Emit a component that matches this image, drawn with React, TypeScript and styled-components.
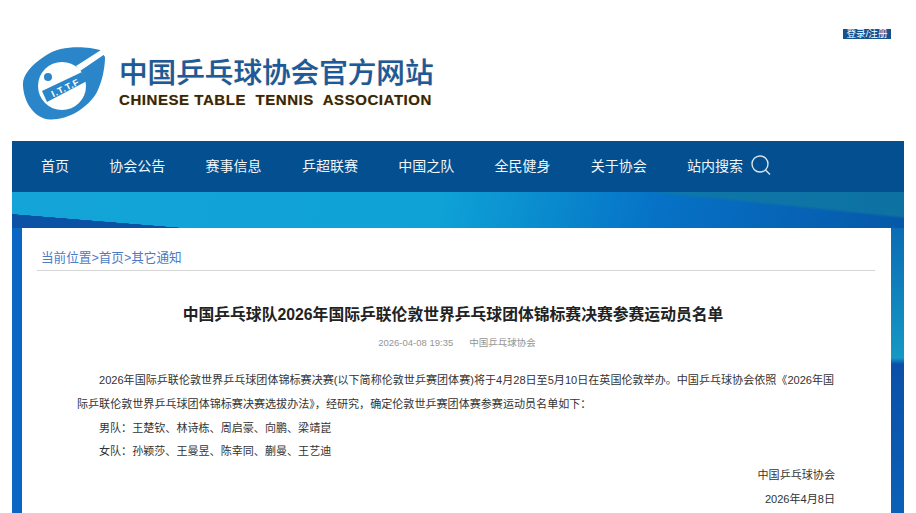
import styled, { createGlobalStyle } from "styled-components";

const CJK = `"Liberation Sans", "Noto Sans CJK SC", sans-serif`;

const GlobalStyle = createGlobalStyle`
  html, body {
    margin: 0;
    padding: 0;
    background: #fff;
    overflow: hidden;
    font-family: ${CJK};
  }
`;

const Page = styled.div`
  width: 892px;
  height: 513px;
  margin-left: 12px;
  overflow: hidden;
`;

const Header = styled.header`
  height: 141px;
  position: relative;
  display: flex;
  align-items: flex-end;
`;

const Logo = styled.a`
  display: flex;
  align-items: center;
  gap: 13px;
  margin: 0 0 20px 10px;
  text-decoration: none;
`;

const LogoText = styled.div`
  display: flex;
  flex-direction: column;
  margin-bottom: 4px;
`;

const LogoCn = styled.div`
  font-size: 28.6px;
  line-height: 36px;
  font-weight: 500;
  color: #1a5a9e;
  white-space: nowrap;
  text-shadow: 0 0 1px #c9a878;
`;

const LogoEn = styled.div`
  font-size: 15px;
  line-height: 17px;
  font-weight: 700;
  letter-spacing: 0.56px;
  color: #33280f;
  white-space: pre;
  text-shadow: 0 0 1px #d8a868;
`;

const LoginLink = styled.a`
  position: absolute;
  top: 29px;
  right: 13px;
  height: 10px;
  padding: 0 3.5px;
  background: #14528f;
  color: #fff;
  font-size: 9.6px;
  line-height: 10px;
`;

const Nav = styled.nav`
  height: 51px;
  box-sizing: border-box;
  padding: 0 0 3px 29px;
  background: #034f8f;
  display: flex;
  align-items: center;
  gap: 40.3px;
`;

const NavItem = styled.a`
  color: #f2f6fa;
  font-size: 14px;
  white-space: nowrap;
`;

const SearchItem = styled(NavItem)`
  display: flex;
  align-items: center;
  gap: 7px;
`;

const Stage = styled.main`
  position: relative;
  height: 321px;
  padding: 36px 13px 0 10px;
  box-sizing: border-box;
  background:
    linear-gradient(180deg, #0a6cb4 36px, #1598c4 166px, #0b50a8 172px, #0a60b8 100%) right top / 13px 100% no-repeat,
    #0a66c2;
`;

const Sky = styled.div`
  position: absolute;
  inset: 0 0 auto 0;
  height: 36px;
  background:
    linear-gradient(to top right, #0b52a6 49.5%, transparent 50.5%) left bottom / 172px 14px no-repeat,
    linear-gradient(to top right, transparent 48%, rgba(16, 122, 160, 0.75) 54%) right top / 255px 26px no-repeat,
    linear-gradient(104deg, #14a4d8 0%, #0ea2d6 48%, #0672c6 72%, #0658a8 100%);
`;

const Card = styled.article`
  position: relative;
  height: 100%;
  box-sizing: border-box;
  background: #fff;
  padding: 0 16px 0 15px;
`;

const Crumb = styled.div`
  height: 43px;
  box-sizing: border-box;
  padding: 22px 0 0 4px;
  font-size: 12.6px;
  line-height: 16px;
  color: #4a7cc4;
  border-bottom: 1px solid #d6d6d6;
`;

const Title = styled.h1`
  margin: 33px 6px 0 0;
  font-size: 15.8px;
  line-height: 22px;
  font-weight: 700;
  text-align: center;
  color: #222;
`;

const Meta = styled.div`
  margin: 10px 0 0 2px;
  display: flex;
  justify-content: center;
  gap: 16px;
  font-size: 9.5px;
  line-height: 14px;
  color: #959595;
`;

const Body = styled.div`
  margin: 19px 40px 0 40px;
  font-size: 11.07px;
  line-height: 23.8px;
  color: #333;
`;

const Para = styled.p<{ $right?: boolean }>`
  margin: 0;
  text-indent: ${(p) => (p.$right ? 0 : "22px")};
  text-align: ${(p) => (p.$right ? "right" : "left")};
`;

const MarkLetters = styled.text`
  font-family: "Liberation Sans", sans-serif;
  font-size: 9px;
  font-weight: 700;
  letter-spacing: 0.8px;
  fill: #fff;
`;

function LogoMark() {
  return (
    <svg width="84" height="76" viewBox="22 45 84 76">
      <path
        d="M100 50 C88 47 62 44 45 56 C30 66 22 76 23 86 C24 104 36 119 50 119.5 C68 120 88 108 97 92 C102 82 105 68 105 57 Z"
        fill="#2a86c8"
      />
      <circle cx="62" cy="86" r="24" fill="#fff" />
      <path d="M76 66 L101 50 L105 54 L80 71 Z" fill="#fff" />
      <circle cx="48" cy="77" r="4" fill="#2a86c8" />
      <path d="M42 91 L82 72 L87 81 L47 102 Z" fill="#2a86c8" />
      <MarkLetters x="65" y="91" textAnchor="middle" transform="rotate(-26 65 87)">
        I.T.T.F
      </MarkLetters>
    </svg>
  );
}

const navItems = ["首页", "协会公告", "赛事信息", "乒超联赛", "中国之队", "全民健身", "关于协会"];

export default function App() {
  return (
    <Page>
      <GlobalStyle />
      <Header>
        <Logo>
          <LogoMark />
          <LogoText>
            <LogoCn>中国乒乓球协会官方网站</LogoCn>
            <LogoEn>{"CHINESE TABLE  TENNIS  ASSOCIATION"}</LogoEn>
          </LogoText>
        </Logo>
        <LoginLink>登录/注册</LoginLink>
      </Header>
      <Nav>
        {navItems.map((item) => (
          <NavItem key={item}>{item}</NavItem>
        ))}
        <SearchItem>
          站内搜索
          <svg width="22" height="22" viewBox="0 0 22 22" fill="none" stroke="#d9e4ee" strokeWidth="1.4">
            <circle cx="10" cy="10" r="8" />
            <path d="M15.5 16 L20 20.5" />
          </svg>
        </SearchItem>
      </Nav>
      <Stage>
        <Sky />
        <Card>
          <Crumb>当前位置&gt;首页&gt;其它通知</Crumb>
          <Title>中国乒乓球队2026年国际乒联伦敦世界乒乓球团体锦标赛决赛参赛运动员名单</Title>
          <Meta>
            <span>2026-04-08 19:35</span>
            <span>中国乒乓球协会</span>
          </Meta>
          <Body>
            <Para>
              2026年国际乒联伦敦世界乒乓球团体锦标赛决赛(以下简称伦敦世乒赛团体赛)将于4月28日至5月10日在英国伦敦举办。中国乒乓球协会依照《2026年国际乒联伦敦世界乒乓球团体锦标赛决赛选拔办法》，经研究，确定伦敦世乒赛团体赛参赛运动员名单如下：
            </Para>
            <Para>男队：王楚钦、林诗栋、周启豪、向鹏、梁靖崑</Para>
            <Para>女队：孙颖莎、王曼昱、陈幸同、蒯曼、王艺迪</Para>
            <Para $right>中国乒乓球协会</Para>
            <Para $right>2026年4月8日</Para>
          </Body>
        </Card>
      </Stage>
    </Page>
  );
}
